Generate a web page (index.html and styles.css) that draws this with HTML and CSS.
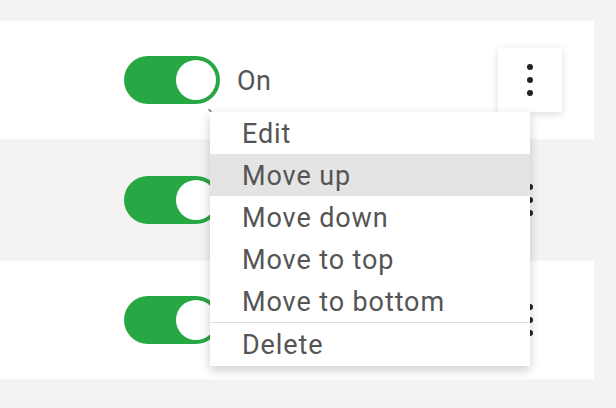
FILE: index.html
```html
<!DOCTYPE html>
<html>
<head>
<meta charset="utf-8">
<link rel="stylesheet" href="styles.css">
</head>
<body>
<div class="list">
  <div class="row row-white">
    <span class="switch"><span class="knob"></span></span>
    <span class="state">On</span>
    <button class="kebab active" aria-label="More"><span class="dot"></span><span class="dot"></span><span class="dot"></span></button>
    <span class="tick"></span>
    <ul class="menu">
      <li class="item">Edit</li>
      <li class="item hover">Move up</li>
      <li class="item">Move down</li>
      <li class="item">Move to top</li>
      <li class="item">Move to bottom</li>
      <li class="sep"></li>
      <li class="item">Delete</li>
    </ul>
  </div>
  <div class="row row-gray">
    <span class="switch"><span class="knob"></span></span>
    <button class="kebab" aria-label="More"><span class="dot"></span><span class="dot"></span><span class="dot"></span></button>
  </div>
  <div class="row row-white">
    <span class="switch"><span class="knob"></span></span>
    <button class="kebab" aria-label="More"><span class="dot"></span><span class="dot"></span><span class="dot"></span></button>
  </div>
</div>
</body>
</html>
```
FILE: styles.css
```css
html, body {
  margin: 0;
  padding: 0;
  background: #f3f3f3;
  font-family: Roboto, "Liberation Sans", sans-serif;
}
.list {
  width: 594px;
  padding-top: 20px;
}
.row {
  position: relative;
  height: 120px;
  box-sizing: border-box;
  display: flex;
  align-items: center;
  padding-left: 124px;
  padding-right: 32px;
}
.row-white {
  background: #ffffff;
  border-top: 1px solid #f7f7f7;
  border-bottom: 1px solid #f7f7f7;
}
.row-gray {
  background: #f3f3f3;
}
.switch {
  width: 96px;
  height: 48px;
  border-radius: 24px;
  background: #28a745;
  display: flex;
  align-items: center;
  justify-content: flex-end;
  padding-right: 4px;
  box-sizing: border-box;
  flex: none;
}
.knob {
  width: 40px;
  height: 40px;
  border-radius: 50%;
  background: #ffffff;
}
.state {
  margin-left: 17px;
  font-size: 27px;
  color: #555555;
  margin-top: 2px;
  letter-spacing: 0.5px;
}
.kebab {
  margin-left: auto;
  width: 64px;
  height: 64px;
  border: 0;
  padding: 0;
  background: transparent;
  display: flex;
  flex-direction: column;
  align-items: center;
  justify-content: center;
  gap: 7px;
}
.kebab.active {
  background: #ffffff;
  box-shadow: 0 2px 8px rgba(0, 0, 0, 0.14);
}
.dot {
  width: 6px;
  height: 6px;
  border-radius: 50%;
  background: #222222;
}
.tick {
  position: absolute;
  left: 208px;
  top: 89px;
  width: 4px;
  height: 1px;
  background: #444444;
  transform: rotate(45deg);
}
.menu {
  position: absolute;
  left: 210px;
  top: 91px;
  width: 320px;
  margin: 0;
  padding: 0 0 1px;
  list-style: none;
  background: #ffffff;
  box-shadow: 0 4px 10px rgba(0, 0, 0, 0.2);
  z-index: 5;
}
.item {
  height: 42px;
  line-height: 44px;
  padding-left: 32px;
  font-size: 27px;
  color: #555555;
  letter-spacing: 0.9px;
}
.item.hover {
  background: #e4e4e4;
}
.sep {
  height: 1px;
  background: #dddddd;
}
```
